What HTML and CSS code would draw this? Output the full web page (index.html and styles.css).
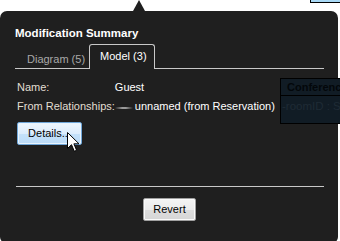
FILE: index.html
```html
<!DOCTYPE html>
<html>
<head>
<meta charset="utf-8">
<link rel="stylesheet" href="styles.css">
</head>
<body>
<div class="stage">
  <div class="bg-node"></div>
  <div class="popup">
    <div class="arrow"></div>
    <div class="title">Modification Summary</div>
    <div class="tabs">
      <div class="tab">Diagram (5)</div>
      <div class="tab active">Model (3)</div>
    </div>
    <div class="props">
      <div class="label">Name:</div>
      <div class="value">Guest</div>
      <div class="label">From Relationships:</div>
      <div class="value rel"><span class="relline"></span><span>unnamed (from Reservation)</span></div>
    </div>
    <div class="actions">
      <button class="btn details">Details...</button>
    </div>
    <div class="divider"></div>
    <div class="footer">
      <button class="btn revert">Revert</button>
    </div>
  </div>
  <div class="class-node">
    <div class="class-name">Conference</div>
    <div class="class-attr">-roomID : String</div>
  </div>
  <svg class="cursor" width="13" height="21" viewBox="0 0 13 21">
    <path d="M0.5 0.5 L0.5 16.5 L4.5 12.7 L7.3 19.3 L9.6 18.3 L6.9 11.8 L12 11.8 Z" fill="#fff" stroke="#000" stroke-width="1" stroke-linejoin="miter"/>
  </svg>
</div>
</body>
</html>
```
FILE: styles.css
```css
html, body {
  margin: 0;
  padding: 0;
  background: #fff;
}
.stage {
  position: relative;
  width: 340px;
  height: 241px;
  overflow: hidden;
  font-family: "Liberation Sans", Arial, sans-serif;
  font-size: 11px;
}
.bg-node {
  position: absolute;
  left: 310px;
  top: -2px;
  width: 40px;
  height: 4px;
  background: #a9d9f6;
  border-left: 1px solid #000;
  border-bottom: 1px solid #000;
}
.popup {
  position: relative;
  margin-top: 11px;
  width: 338px;
  height: 232px;
  box-sizing: border-box;
  padding: 15px 14px 0 15px;
  background: #1f1f1f;
  border-radius: 7px 7px 6px 6px;
  display: flex;
  flex-direction: column;
}
.arrow {
  position: absolute;
  top: -11px;
  left: 133px;
  width: 0;
  height: 0;
  border-left: 6px solid transparent;
  border-right: 6px solid transparent;
  border-bottom: 11px solid #1f1f1f;
}
.title {
  color: #fff;
  font-weight: bold;
  font-size: 11.5px;
  line-height: 14px;
}
.tabs {
  margin-top: 4px;
  display: flex;
  align-items: flex-end;
  border-bottom: 1px solid #c8c8c8;
}
.tab {
  color: #a8a8a8;
  line-height: 13px;
  padding: 0 4px 2px 12px;
}
.tab.active {
  color: #fff;
  padding: 5px 7px 6px 10px;
  margin-bottom: -1px;
  border: 1px solid #c8c8c8;
  border-bottom: none;
  border-radius: 3px 3px 0 0;
  background: #1f1f1f;
}
.props {
  margin-top: 12px;
  padding-left: 2px;
  display: grid;
  grid-template-columns: auto 1fr;
  row-gap: 6px;
  line-height: 13px;
}
.label {
  color: #e2ded2;
}
.value {
  color: #fff;
  white-space: nowrap;
}
.rel {
  display: flex;
  align-items: center;
}
.relline {
  width: 18px;
  height: 2px;
  margin: 3px 2px 0 0;
  background: linear-gradient(to right, rgba(140,140,140,0), #9a9a9a 40%, #9a9a9a 60%, rgba(140,140,140,0));
}
.actions {
  margin-top: 9px;
  padding-left: 2px;
  display: flex;
}
.btn {
  font-family: "Liberation Sans", Arial, sans-serif;
  font-size: 11px;
  line-height: 13px;
  color: #000;
  height: 23px;
  padding: 0;
  margin: 0;
  box-sizing: border-box;
  border-radius: 2px;
  white-space: nowrap;
}
.details {
  width: 65px;
  border: 1px solid #6fa6d8;
  background: linear-gradient(to bottom, #eef7fe 0%, #dcecfc 50%, #c4e1fa 51%, #bcdcf8 100%);
  box-shadow: inset 0 0 0 1px #e8f4fe;
}
.divider {
  margin-top: 41px;
  margin-left: 1px;
  height: 1px;
  background: #c8c8c8;
}
.footer {
  margin-top: 11px;
  display: flex;
  justify-content: center;
}
.revert {
  width: 53px;
  border: 1px solid #a0a0a0;
  background: linear-gradient(to bottom, #f4f4f4 0%, #ebebeb 50%, #dddddd 51%, #d6d6d6 100%);
  box-shadow: inset 0 0 0 1px #fafafa;
}
.class-node {
  position: absolute;
  left: 280px;
  top: 78px;
  width: 80px;
  height: 46px;
  box-sizing: border-box;
  border: 1px solid #000;
  background: #111c25;
  white-space: nowrap;
}
.class-name {
  height: 17px;
  box-sizing: border-box;
  border-bottom: 1px solid #000;
  padding-left: 6px;
  line-height: 16px;
  font-weight: bold;
  color: #03070a;
}
.class-attr {
  padding-left: 1px;
  padding-top: 4px;
  line-height: 13px;
  font-size: 11.5px;
  color: #1f2b35;
}
.cursor {
  position: absolute;
  left: 67px;
  top: 132px;
}
```
